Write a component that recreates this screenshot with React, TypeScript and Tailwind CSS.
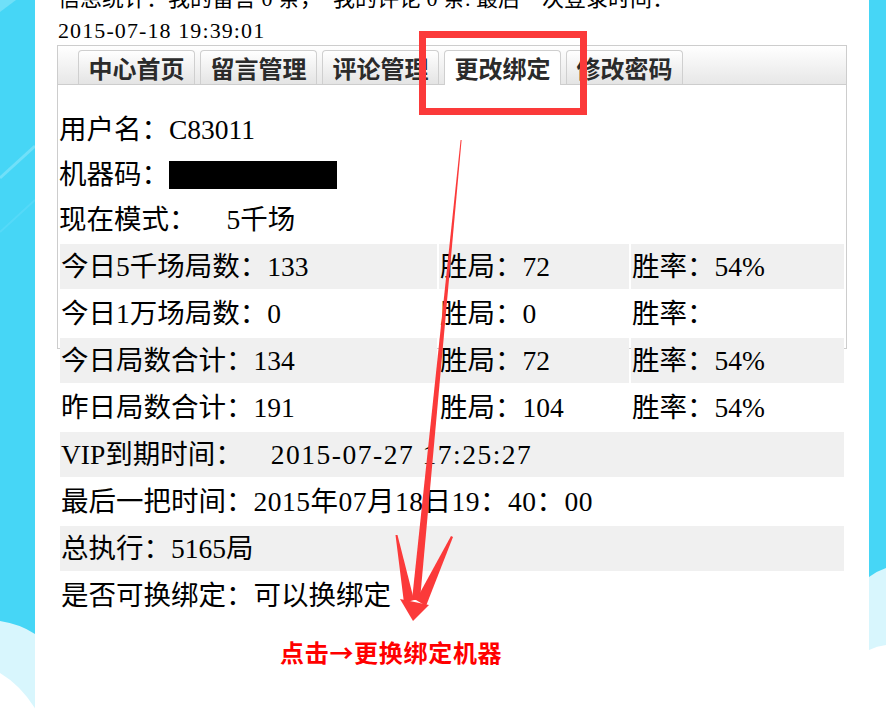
import React from 'react';

const tabs = ['中心首页', '留言管理', '评论管理', '更改绑定', '修改密码'];

const LeftStrip = () => (
  <svg width="35" height="713" viewBox="0 0 35 713" className="shrink-0 block">
    <rect width="35" height="713" fill="#46d6f6" />
    <path d="M0 0 L16 0 L0 12 Z" fill="#8ae6fa" opacity="0.6" />
    <line x1="0" y1="178" x2="35" y2="146" stroke="#70e0f9" strokeWidth="3" />
    <line x1="0" y1="232" x2="35" y2="200" stroke="#55d9f8" strokeWidth="2" />
    <path d="M0 621 Q20 624 35 634 L35 713 L0 713 Z" fill="#d8f6fd" />
    <path d="M0 673 Q22 686 38 713 L0 713 Z" fill="#ffffff" />
  </svg>
);

const RightStrip = () => (
  <svg width="17" height="713" viewBox="0 0 17 713" className="shrink-0 block">
    <rect width="17" height="713" fill="#46d6f6" />
    <path d="M0 577 Q8 571 17 568 L17 713 L0 713 Z" fill="#d8f6fd" />
    <path d="M0 650 Q8 646 17 645 L17 713 L0 713 Z" fill="#ffffff" />
  </svg>
);

const Overlay = () => (
  <svg width="886" height="713" viewBox="0 0 886 713" className="absolute left-0 top-0 pointer-events-none">
    {/* highlight around the active tab */}
    <rect x="422.5" y="34.5" width="161" height="77" fill="none" stroke="#fb3a3a" strokeWidth="7" />
    {/* arrow */}
    <polygon points="460.6,140 461.6,140 420,600 412,600" fill="#fb3a3a" />
    <polygon points="395.5,535 397.5,535 414,600 404,603" fill="#fb3a3a" />
    <polygon points="451,536 453,537 426,606 416,600" fill="#fb3a3a" />
    <polygon points="400,599 429,605 413,621" fill="#fb3a3a" />
  </svg>
);

const Cell = ({ children, span }: { children?: React.ReactNode; span?: boolean }) => (
  <div className={`${span ? 'col-span-3' : ''} h-[45px] flex items-center px-[1px] whitespace-nowrap`}>{children}</div>
);

const GrayCell = ({ children, span }: { children?: React.ReactNode; span?: boolean }) => (
  <div className={`${span ? 'col-span-3' : ''} h-[45px] flex items-center px-[1px] whitespace-nowrap bg-[#f0f0f0]`}>
    {children}
  </div>
);

export default function App() {
  return (
    <div className="relative w-[886px] h-[713px] overflow-hidden flex bg-white text-black font-['Liberation_Serif','Noto_Sans_CJK_SC',serif]">
      <LeftStrip />

      <main className="w-[834px] shrink-0 bg-white pl-[22px]">
        <div className="mt-[-17px] leading-[32px] text-[22px] pl-[1px] whitespace-nowrap">
          信息统计：我的留言 0 条，&nbsp;&nbsp;我的评论 0 条. 最后一次登录时间：
        </div>
        <div className="leading-[32px] text-[22px] pl-[1px] whitespace-nowrap tracking-[1.1px]">2015-07-18 19:39:01</div>

        {/* tab panel */}
        <div className="mt-[-2px] w-[790px] h-[304px] border border-[#cdcdcd]">
          <div className="h-[39px] pt-[4px] pl-[20px] flex items-start gap-[5px] border-b border-[#cdcdcd] bg-linear-to-b from-white to-[#e7e7e7]">
            {tabs.map((t, i) =>
              i === 3 ? (
                <div
                  key={t}
                  className="relative z-10 w-[117px] h-[35px] mb-[-1px] flex items-center justify-center rounded-t-[4px] border border-b-0 border-[#cfcfcf] bg-white text-[24px] font-bold text-[#2b2b2b] font-['Noto_Sans_CJK_SC',sans-serif]"
                >
                  {t}
                </div>
              ) : (
                <div
                  key={t}
                  className="w-[117px] h-[34px] flex items-center justify-center rounded-t-[4px] border border-b-0 border-[#cfcfcf] bg-linear-to-b from-white to-[#e4e4e4] text-[24px] font-bold text-[#2b2b2b] font-['Noto_Sans_CJK_SC',sans-serif]"
                >
                  {t}
                </div>
              )
            )}
          </div>

          <div className="pt-[22px] text-[27.5px]">
            <div className="h-[45px] flex items-center pl-[1px] whitespace-nowrap">用户名：C83011</div>
            <div className="h-[45px] flex items-center pl-[1px] whitespace-nowrap">
              机器码：<span className="inline-block w-[168px] h-[28px] bg-black" />
            </div>
            <div className="h-[45px] flex items-center pl-[1px] whitespace-nowrap">
              现在模式：<span className="pl-[30px]">5千场</span>
            </div>

            <div className="grid grid-cols-[377px_190px_213px] gap-[2px] px-[2px] pt-[2px]">
              <GrayCell>今日5千场局数：133</GrayCell>
              <GrayCell>胜局：72</GrayCell>
              <GrayCell>胜率：54%</GrayCell>

              <Cell>今日1万场局数：0</Cell>
              <Cell>胜局：0</Cell>
              <Cell>胜率：</Cell>

              <GrayCell>今日局数合计：134</GrayCell>
              <GrayCell>胜局：72</GrayCell>
              <GrayCell>胜率：54%</GrayCell>

              <Cell>昨日局数合计：191</Cell>
              <Cell>胜局：104</Cell>
              <Cell>胜率：54%</Cell>

              <GrayCell span>
                VIP到期时间：<span className="pl-[28px] tracking-[1.5px]">2015-07-27 17:25:27</span>
              </GrayCell>
              <Cell span>
                最后一把时间：<span className="tracking-[0.5px]">2015年07月18日19：40：00</span>
              </Cell>
              <GrayCell span>总执行：5165局</GrayCell>
              <Cell span>是否可换绑定：可以换绑定</Cell>
            </div>

            <div className="mt-[19px] pl-[222px] leading-[30px] text-[24px] font-bold tracking-[0.7px] text-[#ff0000] whitespace-nowrap font-['Noto_Sans_CJK_SC',sans-serif]">
              点击→更换绑定机器
            </div>
          </div>
        </div>
      </main>

      <RightStrip />
      <Overlay />
    </div>
  );
}
